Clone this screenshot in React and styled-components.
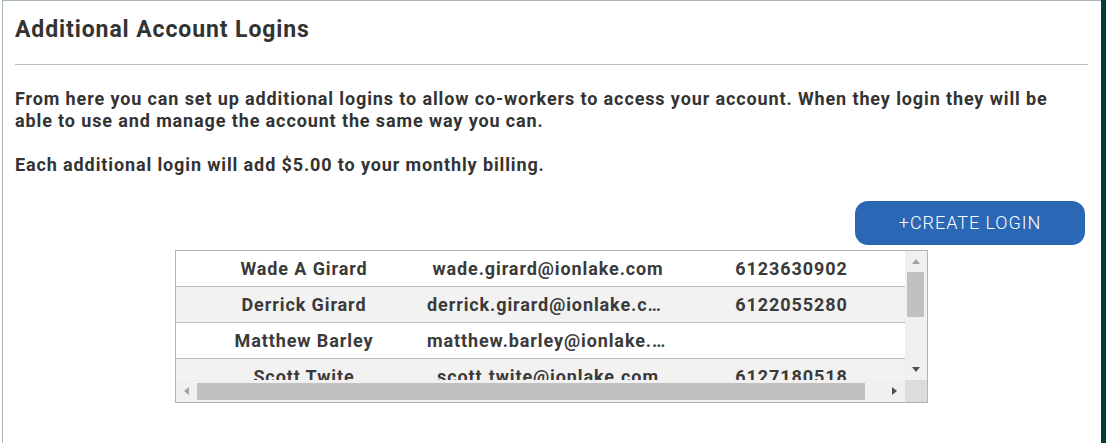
import React from "react";
import styled, { createGlobalStyle } from "styled-components";

const Global = createGlobalStyle`
  html, body { margin: 0; padding: 0; background: #ffffff; }
  body { font-family: Roboto, "Liberation Sans", Arial, sans-serif; color: #333333; }
  * { box-sizing: border-box; }
`;

const Page = styled.div`
  display: flex;
  width: 1106px;
  height: 443px;
  overflow: hidden;
`;

const Gutter = styled.div`
  width: 2px;
  flex: none;
`;

const Panel = styled.section`
  flex: 1;
  border-left: 1px solid #aab5b8;
  border-top: 1px solid #aab5b8;
  padding: 15px 13px 0 12px;
  display: flex;
  flex-direction: column;
`;

const SideBar = styled.div`
  width: 5px;
  flex: none;
  background: #083a3c;
`;

const Title = styled.h2`
  margin: 0;
  font-size: 23px;
  line-height: 28px;
  font-weight: 700;
  letter-spacing: 0.9px;
  color: #333333;
`;

const Rule = styled.hr`
  margin: 20px 0 0;
  border: 0;
  border-top: 1px solid #b5c0c0;
  height: 0;
`;

const Text = styled.p`
  margin: ${(p) => p.$top}px 0 0;
  font-size: 18px;
  line-height: 22px;
  font-weight: 700;
  letter-spacing: 0.88px;
  color: #333333;
`;

const ActionRow = styled.div`
  display: flex;
  justify-content: flex-end;
  margin-top: 25px;
  padding-right: 3px;
`;

const CreateButton = styled.button`
  width: 230px;
  height: 44px;
  border: 0;
  border-radius: 13px;
  background: #2a67b5;
  color: #ffffff;
  font-family: Roboto, "Liberation Sans", Arial, sans-serif;
  font-size: 18px;
  font-weight: 300;
  letter-spacing: 0.95px;
  padding: 0 0 2px;
  cursor: pointer;
`;

const TableWrap = styled.div`
  align-self: center;
  margin-top: 5px;
  width: 753px;
  height: 153px;
  border: 1px solid #b0b4b4;
  display: grid;
  grid-template-columns: 1fr 22px;
  grid-template-rows: 1fr 22px;
`;

const Body = styled.div`
  overflow: hidden;
`;

const Row = styled.div`
  display: grid;
  grid-template-columns: 248px 248px 1fr;
  height: 36px;
  border-bottom: 1px solid #b3bcbc;
  background: ${(p) => (p.$alt ? "#f2f2f2" : "#ffffff")};
  align-items: center;
`;

const Cell = styled.div`
  font-size: 18px;
  font-weight: 700;
  letter-spacing: 0.9px;
  color: #3a3a3a;
  text-align: center;
  white-space: nowrap;
  overflow: hidden;
  text-overflow: ellipsis;
  padding: 0 ${(p) => p.$pr || 0}px 0 ${(p) => p.$pl || 0}px;
`;

const VTrack = styled.div`
  background: #f0f0f0;
  display: flex;
  flex-direction: column;
  align-items: center;
  padding: 0 3px 0 2px;
`;

const HTrack = styled.div`
  background: #f0f0f0;
  display: flex;
  align-items: center;
`;

const Corner = styled.div`
  background: #dcdcdc;
`;

const ArrowBox = styled.div`
  flex: none;
  width: ${(p) => p.$w}px;
  height: ${(p) => p.$h}px;
  display: flex;
  align-items: center;
  justify-content: center;
`;

const VThumb = styled.div`
  width: 17px;
  height: 45px;
  background: #c1c1c1;
`;

const HThumb = styled.div`
  width: 668px;
  height: 17px;
  background: #c1c1c1;
`;

const Spacer = styled.div`
  flex: 1;
`;

const Tri = ({ dir, color }) => {
  const pts = {
    up: "0,5 4,0 8,5",
    down: "0,0 8,0 4,5",
    left: "5,0 5,8 0,4",
    right: "0,0 5,4 0,8",
  }[dir];
  const vertical = dir === "up" || dir === "down";
  return (
    <svg width={vertical ? 8 : 5} height={vertical ? 5 : 8} viewBox={vertical ? "0 0 8 5" : "0 0 5 8"}>
      <polygon points={pts} fill={color} />
    </svg>
  );
};

const rows = [
  { name: "Wade A Girard", email: "wade.girard@ionlake.com", phone: "6123630902" },
  { name: "Derrick Girard", email: "derrick.girard@ionlake.com", phone: "6122055280" },
  { name: "Matthew Barley", email: "matthew.barley@ionlake.com", phone: "" },
  { name: "Scott Twite", email: "scott.twite@ionlake.com", phone: "6127180518" },
];

export default function App() {
  return (
    <>
      <Global />
      <Page>
        <Gutter />
        <Panel>
          <Title>Additional Account Logins</Title>
          <Rule />
          <Text $top={23}>
            From here you can set up additional logins to allow co-workers to access your account. When they login they will be
            able to use and manage the account the same way you can.
          </Text>
          <Text $top={22}>Each additional login will add $5.00 to your monthly billing.</Text>
          <ActionRow>
            <CreateButton>+CREATE LOGIN</CreateButton>
          </ActionRow>
          <TableWrap>
            <Body>
              {rows.map((r, i) => (
                <Row key={r.name} $alt={i % 2 === 1}>
                  <Cell $pl={8}>{r.name}</Cell>
                  <Cell $pl={3} $pr={3}>{r.email}</Cell>
                  <Cell $pl={6}>{r.phone}</Cell>
                </Row>
              ))}
            </Body>
            <VTrack>
              <ArrowBox $w={17} $h={21}>
                <Tri dir="up" color="#a3a3a3" />
              </ArrowBox>
              <VThumb />
              <Spacer />
              <ArrowBox $w={17} $h={21}>
                <Tri dir="down" color="#505050" />
              </ArrowBox>
            </VTrack>
            <HTrack>
              <ArrowBox $w={21} $h={17}>
                <Tri dir="left" color="#a3a3a3" />
              </ArrowBox>
              <HThumb />
              <Spacer />
              <ArrowBox $w={21} $h={17}>
                <Tri dir="right" color="#505050" />
              </ArrowBox>
            </HTrack>
            <Corner />
          </TableWrap>
        </Panel>
        <SideBar />
      </Page>
    </>
  );
}
